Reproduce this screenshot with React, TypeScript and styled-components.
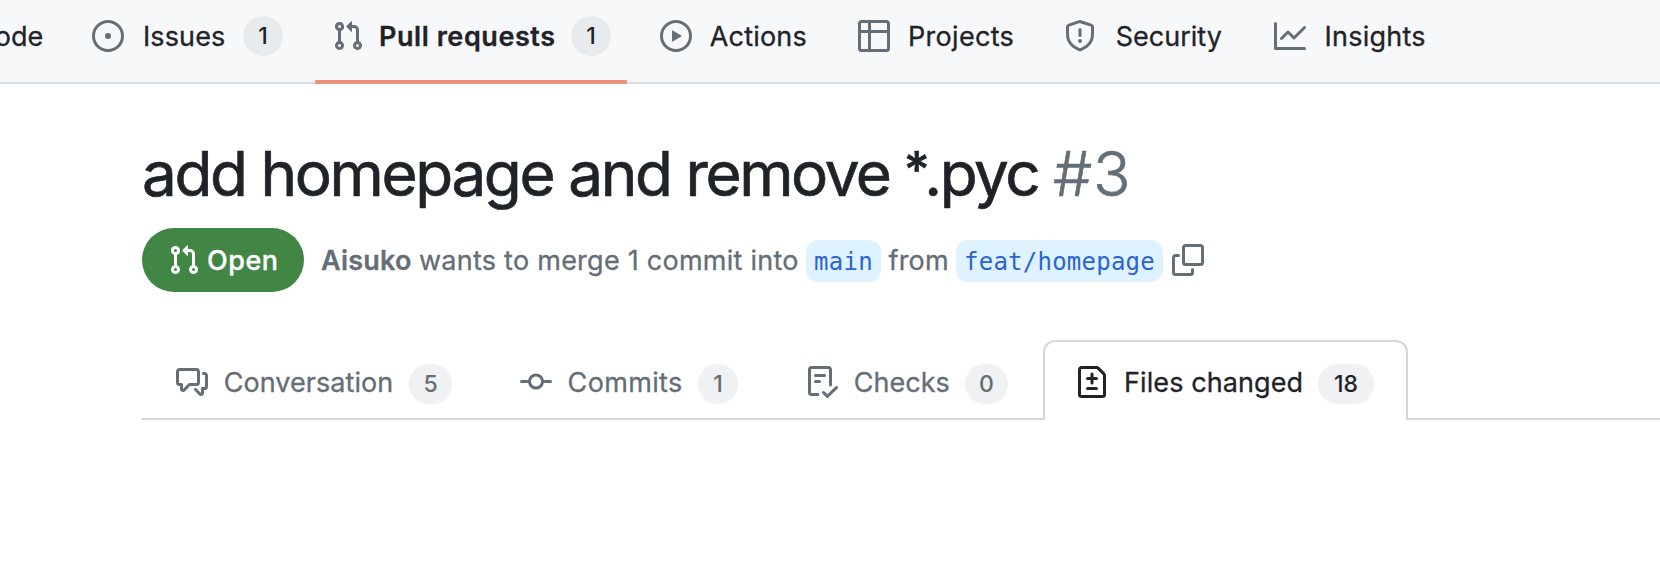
import React from "react";
import styled, { createGlobalStyle, css } from "styled-components";

const GlobalStyle = createGlobalStyle`
  *, *::before, *::after { box-sizing: border-box; }
  html, body { margin: 0; padding: 0; background: #ffffff; overflow: hidden; }
  body {
    color: #1f2328;
    font-family: Inter, "Liberation Sans", sans-serif;
    font-size: 27px;
    line-height: 32px;
    -webkit-font-smoothing: antialiased;
  }
`;

const paths = {
  issue:
    "M8 9.5a1.5 1.5 0 1 0 0-3 1.5 1.5 0 0 0 0 3ZM8 0a8 8 0 1 1 0 16A8 8 0 0 1 8 0ZM1.5 8a6.5 6.5 0 1 0 13 0 6.5 6.5 0 0 0-13 0Z",
  pullRequest:
    "M1.5 3.25a2.25 2.25 0 1 1 3 2.122v5.256a2.251 2.251 0 1 1-1.5 0V5.372A2.25 2.25 0 0 1 1.5 3.25Zm5.677-.177L9.573.677A.25.25 0 0 1 10 .854V2.5h1A2.5 2.5 0 0 1 13.5 5v5.628a2.251 2.251 0 1 1-1.5 0V5a1 1 0 0 0-1-1h-1v1.646a.25.25 0 0 1-.427.177L7.177 3.427a.25.25 0 0 1 0-.354ZM3.75 2.5a.75.75 0 1 0 0 1.5.75.75 0 0 0 0-1.5Zm0 9.5a.75.75 0 1 0 0 1.5.75.75 0 0 0 0-1.5Zm8.25.75a.75.75 0 1 0 1.5 0 .75.75 0 0 0-1.5 0Z",
  play:
    "M8 0a8 8 0 1 1 0 16A8 8 0 0 1 8 0ZM1.5 8a6.5 6.5 0 1 0 13 0 6.5 6.5 0 0 0-13 0Zm4.879-2.773 4.264 2.559a.25.25 0 0 1 0 .428l-4.264 2.559A.25.25 0 0 1 6 10.559V5.442a.25.25 0 0 1 .379-.215Z",
  table:
    "M0 1.75C0 .784.784 0 1.75 0h12.5C15.216 0 16 .784 16 1.75v12.5A1.75 1.75 0 0 1 14.25 16H1.75A1.75 1.75 0 0 1 0 14.25ZM6.5 6.5v8h7.75a.25.25 0 0 0 .25-.25V6.5Zm8-1.5V1.75a.25.25 0 0 0-.25-.25H6.5V5Zm-13 1.5v7.75c0 .138.112.25.25.25H5v-8ZM5 5V1.5H1.75a.25.25 0 0 0-.25.25V5Z",
  shield:
    "M7.467.133a1.748 1.748 0 0 1 1.066 0l5.25 1.68A1.75 1.75 0 0 1 15 3.48V7c0 1.566-.32 3.182-1.303 4.682-.983 1.498-2.585 2.813-5.032 3.855a1.697 1.697 0 0 1-1.33 0c-2.447-1.042-4.049-2.357-5.032-3.855C1.32 10.182 1 8.566 1 7V3.48a1.75 1.75 0 0 1 1.217-1.667Zm.61 1.429a.25.25 0 0 0-.153 0l-5.25 1.68a.25.25 0 0 0-.174.238V7c0 1.358.275 2.666 1.057 3.86.784 1.194 2.121 2.34 4.366 3.297a.196.196 0 0 0 .154 0c2.245-.956 3.582-2.104 4.366-3.298C13.225 9.666 13.5 8.36 13.5 7V3.48a.251.251 0 0 0-.174-.237l-5.25-1.68ZM8.75 4.75v3a.75.75 0 0 1-1.5 0v-3a.75.75 0 0 1 1.5 0ZM9 10.5a1 1 0 1 1-2 0 1 1 0 0 1 2 0Z",
  graph:
    "M1.5 1.75V13.5h13.75a.75.75 0 0 1 0 1.5H.75a.75.75 0 0 1-.75-.75V1.75a.75.75 0 0 1 1.5 0Zm14.28 2.53-5.25 5.25a.75.75 0 0 1-1.06 0L7 7.06 4.28 9.78a.751.751 0 0 1-1.042-.018.751.751 0 0 1-.018-1.042l3.25-3.25a.75.75 0 0 1 1.06 0L10 7.94l4.72-4.72a.751.751 0 0 1 1.042.018.751.751 0 0 1 .018 1.042Z",
  discussion:
    "M1.75 1h8.5c.966 0 1.75.784 1.75 1.75v5.5A1.75 1.75 0 0 1 10.25 10H7.061l-2.574 2.573A1.458 1.458 0 0 1 2 11.543V10h-.25A1.75 1.75 0 0 1 0 8.25v-5.5C0 1.784.784 1 1.75 1ZM1.5 2.75v5.5c0 .138.112.25.25.25h1a.75.75 0 0 1 .75.75v2.19l2.72-2.72a.749.749 0 0 1 .53-.22h3.5a.25.25 0 0 0 .25-.25v-5.5a.25.25 0 0 0-.25-.25h-8.5a.25.25 0 0 0-.25.25Zm13 2a.25.25 0 0 0-.25-.25h-.5a.75.75 0 0 1 0-1.5h.5c.966 0 1.75.784 1.75 1.75v5.5A1.75 1.75 0 0 1 14.25 12H14v1.543a1.458 1.458 0 0 1-2.487 1.03L9.22 12.28a.749.749 0 0 1 .326-1.275.749.749 0 0 1 .734.215l2.22 2.22v-2.19a.75.75 0 0 1 .75-.75h1a.25.25 0 0 0 .25-.25Z",
  commit:
    "M11.93 8.5a4.002 4.002 0 0 1-7.86 0H.75a.75.75 0 0 1 0-1.5h3.32a4.002 4.002 0 0 1 7.86 0h3.32a.75.75 0 0 1 0 1.5Zm-1.43-.75a2.5 2.5 0 1 0-5 0 2.5 2.5 0 0 0 5 0Z",
  checklist:
    "M2.5 1.75v11.5c0 .138.112.25.25.25h3.17a.75.75 0 0 1 0 1.5H2.75A1.75 1.75 0 0 1 1 13.25V1.75C1 .784 1.784 0 2.75 0h8.5C12.216 0 13 .784 13 1.75v7.736a.75.75 0 0 1-1.5 0V1.75a.25.25 0 0 0-.25-.25h-8.5a.25.25 0 0 0-.25.25Zm13.274 9.537v-.001l-4.557 4.45a.75.75 0 0 1-1.055-.008l-1.943-1.95a.75.75 0 0 1 1.062-1.058l1.419 1.425 4.026-3.932a.75.75 0 1 1 1.048 1.074ZM4.75 4h4.5a.75.75 0 0 1 0 1.5h-4.5a.75.75 0 0 1 0-1.5ZM4 7.75A.75.75 0 0 1 4.75 7h2a.75.75 0 0 1 0 1.5h-2A.75.75 0 0 1 4 7.75Z",
  fileDiff:
    "M1 1.75C1 .784 1.784 0 2.75 0h7.586c.464 0 .909.184 1.237.513l2.914 2.914c.329.328.513.773.513 1.237v9.586A1.75 1.75 0 0 1 13.25 16H2.75A1.75 1.75 0 0 1 1 14.25Zm1.75-.25a.25.25 0 0 0-.25.25v12.5c0 .138.112.25.25.25h10.5a.25.25 0 0 0 .25-.25V4.664a.25.25 0 0 0-.073-.177l-2.914-2.914a.25.25 0 0 0-.177-.073ZM8 3.25a.75.75 0 0 1 .75.75v1.5h1.5a.75.75 0 0 1 0 1.5h-1.5v1.5a.75.75 0 0 1-1.5 0V7h-1.5a.75.75 0 0 1 0-1.5h1.5V4A.75.75 0 0 1 8 3.25Zm-3 8a.75.75 0 0 1 .75-.75h4.5a.75.75 0 0 1 0 1.5h-4.5a.75.75 0 0 1-.75-.75Z",
  copy:
    "M0 6.75C0 5.784.784 5 1.75 5h1.5a.75.75 0 0 1 0 1.5h-1.5a.25.25 0 0 0-.25.25v7.5c0 .138.112.25.25.25h7.5a.25.25 0 0 0 .25-.25v-1.5a.75.75 0 0 1 1.5 0v1.5A1.75 1.75 0 0 1 9.25 16h-7.5A1.75 1.75 0 0 1 0 14.25ZM5 1.75C5 .784 5.784 0 6.75 0h7.5C15.216 0 16 .784 16 1.75v7.5A1.75 1.75 0 0 1 14.25 11h-7.5A1.75 1.75 0 0 1 5 9.25Zm1.75-.25a.25.25 0 0 0-.25.25v7.5c0 .138.112.25.25.25h7.5a.25.25 0 0 0 .25-.25v-7.5a.25.25 0 0 0-.25-.25Z",
};

type IconName = keyof typeof paths;

const IconSvg = styled.svg`
  display: block;
  flex: none;
  width: 32px;
  height: 32px;
  fill: currentColor;
`;

const Icon = ({ name }: { name: IconName }) => (
  <IconSvg viewBox="0 0 16 16" aria-hidden="true">
    <path d={paths[name]} />
  </IconSvg>
);

const Label = styled.span<{ $width: number; $lead?: number; $track?: number }>`
  flex: none;
  width: ${(p) => p.$width}px;
  padding-top: 2px;
  padding-left: ${(p) => p.$lead ?? 0}px;
  letter-spacing: ${(p) => p.$track ?? 0}px;
  white-space: nowrap;
  -webkit-text-stroke: 0.3px currentColor;
`;

const Counter = styled.span<{ $width: number; $tone: string }>`
  display: flex;
  align-items: center;
  justify-content: center;
  flex: none;
  width: ${(p) => p.$width}px;
  height: 40px;
  border-radius: 20px;
  background: ${(p) => p.$tone};
  font-size: 23px;
  font-weight: 500;
`;

const RepoNav = styled.nav`
  display: flex;
  gap: 16px;
  height: 84px;
  background: #f6f8fa;
  border-bottom: 2px solid #d8dee4;
`;

const NavItem = styled.a<{ $active?: boolean; $counted?: boolean; $clipped?: boolean }>`
  position: relative;
  display: flex;
  align-items: center;
  flex: none;
  height: 72px;
  padding: 0 ${(p) => (p.$counted ? 17 : 16)}px 0 16px;
  margin-left: ${(p) => (p.$clipped ? -41 : 0)}px;
  font-weight: ${(p) => (p.$active ? 600 : 400)};

  ${IconSvg} {
    color: #656d76;
  }

  ${(p) =>
    p.$active &&
    css`
      &::after {
        content: "";
        position: absolute;
        left: -1px;
        right: 1px;
        top: 80px;
        height: 4px;
        border-radius: 1px;
        background: #ee9179;
      }
    `}
`;

const Main = styled.main`
  padding: 50px 0 0 142px;
`;

const Title = styled.h1`
  display: flex;
  margin: 0;
  height: 80px;
  font-size: 62px;
  line-height: 80px;
  font-weight: 400;
  white-space: nowrap;
`;

const TitleText = styled.span`
  width: 911px;
  letter-spacing: -2.4px;
  -webkit-text-stroke: 0.7px currentColor;
`;

const Star = styled.span`
  position: relative;
  top: -9px;
  margin-left: -1px;
  font-size: 50px;
  line-height: 1;
  font-weight: 500;
  letter-spacing: -5.5px;
`;

const Number = styled.span`
  color: #656d76;
  font-weight: 300;
  letter-spacing: 0.8px;
  -webkit-text-stroke: 0.6px currentColor;
`;

const Meta = styled.div`
  display: flex;
  align-items: center;
  height: 64px;
  margin-top: 14px;
  color: #656d76;
`;

const State = styled.span`
  display: flex;
  align-items: center;
  width: 162px;
  height: 64px;
  margin-right: 17px;
  padding-left: 26px;
  border-radius: 32px;
  background: #428646;
  color: #ffffff;
  font-weight: 500;
`;

const Author = styled(Label)`
  font-weight: 600;
`;

const Branch = styled.span<{ $width: number }>`
  flex: none;
  width: ${(p) => p.$width}px;
  height: 42px;
  margin-top: 2px;
  padding-top: 1px;
  border-radius: 12px;
  background: #dff2ff;
  color: #2a63d6;
  font: 400 24px/42px "DejaVu Sans Mono", monospace;
  letter-spacing: 0.24px;
  text-align: center;
`;

const Copy = styled.span`
  margin-left: 9px;
`;

const Tabs = styled.div`
  display: flex;
  height: 80px;
  margin-top: 48px;
  border-bottom: 2px solid #d0d7de;
`;

const Tab = styled.a<{ $selected?: boolean }>`
  display: flex;
  align-items: center;
  flex: none;
  height: 80px;
  padding: 0 34px;
  color: #656d76;

  ${IconSvg}, ${Label} {
    margin-top: 4px;
  }
  ${Counter} {
    margin-top: 8px;
  }

  ${(p) =>
    p.$selected &&
    css`
      margin-left: 1px;
      padding: 0 32px 2px 31px;
      border: 2px solid #d0d7de;
      border-bottom: 0;
      border-radius: 12px 12px 0 0;
      background: #ffffff;
      color: #1f2328;
    `}
`;

const navTone = "#e7ebed";
const tabTone = "#eff1f3";

export default function App() {
  return (
    <>
      <GlobalStyle />
      <RepoNav>
        <NavItem $clipped>
          <Label $width={69}>Code</Label>
        </NavItem>
        <NavItem $counted>
          <Icon name="issue" />
          <Label $width={119} $lead={19} $track={0.12}>Issues</Label>
          <Counter $width={40} $tone={navTone}>1</Counter>
        </NavItem>
        <NavItem $active $counted>
          <Icon name="pullRequest" />
          <Label $width={207} $lead={15} $track={0.56}>Pull requests</Label>
          <Counter $width={40} $tone={navTone}>1</Counter>
        </NavItem>
        <NavItem>
          <Icon name="play" />
          <Label $width={118} $lead={17.8} $track={0.17}>Actions</Label>
        </NavItem>
        <NavItem>
          <Icon name="table" />
          <Label $width={126} $lead={18} $track={0.3}>Projects</Label>
        </NavItem>
        <NavItem>
          <Icon name="shield" />
          <Label $width={130} $lead={19.7}>Security</Label>
        </NavItem>
        <NavItem>
          <Icon name="graph" />
          <Label $width={122} $lead={18.6} $track={0.24}>Insights</Label>
        </NavItem>
      </RepoNav>
      <Main>
        <Title>
          <TitleText>
            add homepage and remove <Star>*</Star>.pyc
          </TitleText>
          <Number>#3</Number>
        </Title>
        <Meta>
          <State>
            <Icon name="pullRequest" />
            <Label $width={90} $lead={7} $track={0.5}>Open</Label>
          </State>
          <Author $width={98} $track={0.2}>Aisuko</Author>
          <Label $width={387} $track={0.25}>wants to merge 1 commit into</Label>
          <Branch $width={75}>main</Branch>
          <Label $width={75} $lead={7.5} $track={0.2}>from</Label>
          <Branch $width={207}>feat/homepage</Branch>
          <Copy>
            <Icon name="copy" />
          </Copy>
        </Meta>
        <Tabs>
          <Tab>
            <Icon name="discussion" />
            <Label $width={201} $lead={15.7} $track={0.05}>Conversation</Label>
            <Counter $width={43} $tone={tabTone}>5</Counter>
          </Tab>
          <Tab>
            <Icon name="commit" />
            <Label $width={146} $lead={15.6} $track={0.35}>Commits</Label>
            <Counter $width={40} $tone={tabTone}>1</Counter>
          </Tab>
          <Tab>
            <Icon name="checklist" />
            <Label $width={127} $lead={15.7} $track={0.04}>Checks</Label>
            <Counter $width={43} $tone={tabTone}>0</Counter>
          </Tab>
          <Tab $selected>
            <Icon name="fileDiff" />
            <Label $width={210} $lead={16} $track={0.1}>Files changed</Label>
            <Counter $width={56} $tone={tabTone}>18</Counter>
          </Tab>
        </Tabs>
      </Main>
    </>
  );
}
